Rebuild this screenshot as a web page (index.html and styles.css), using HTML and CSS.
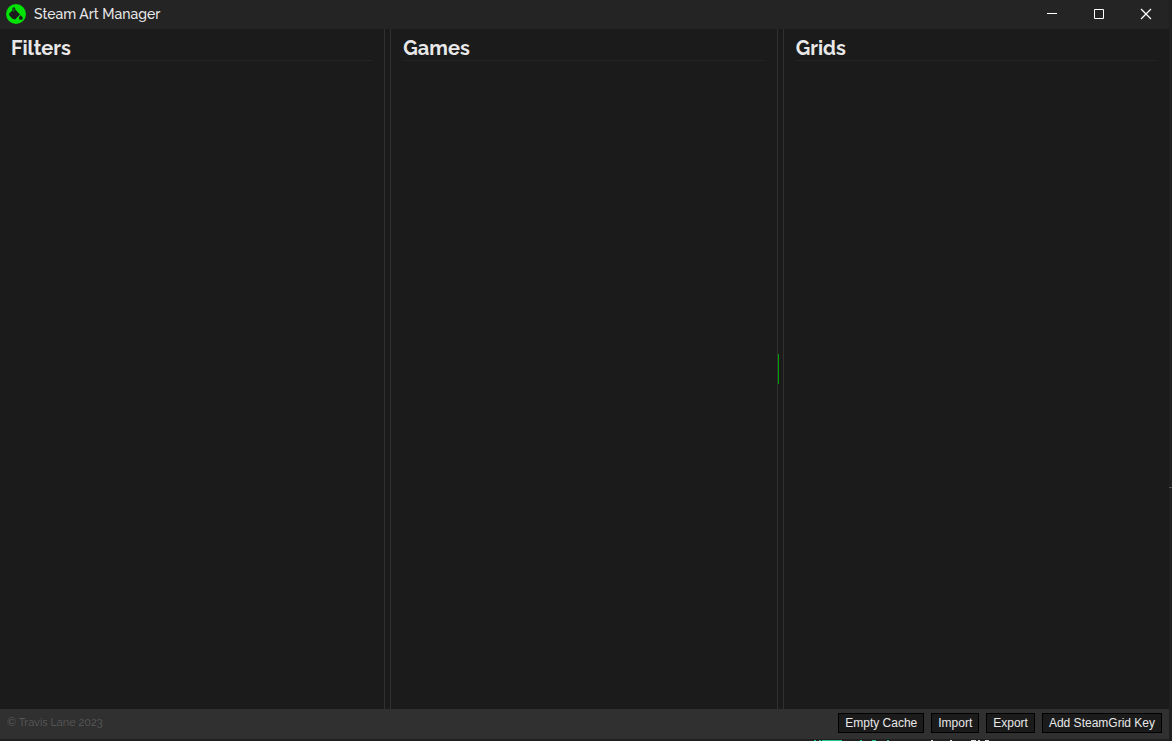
FILE: index.html
```html
<!DOCTYPE html>
<html lang="en">
<head>
<meta charset="utf-8">
<title>Steam Art Manager</title>
<link rel="stylesheet" href="styles.css">
</head>
<body>
<div class="app">
  <header class="titlebar">
    <svg class="logo" viewBox="0 0 20 20" aria-hidden="true">
      <circle cx="10" cy="10" r="10" fill="#00e304"/>
      <path d="M6.4 4.2Q7.8 2.2 9.2 4.2V5.4L14 10.4L9.2 15.4L6.5 14.8L3.2 11.2V9.4L6.4 6.6Z" fill="#1b1b1b"/>
      <path d="M7.8 4.4V8" stroke="#08880a" stroke-width="1"/>
      <path d="M14.7 11L16.6 13.4A1.9 1.9 0 1 1 12.9 13.7Z" fill="#1b1b1b"/>
    </svg>
    <span class="app-name">Steam Art Manager</span>
    <div class="window-controls">
      <button class="window-button" type="button" aria-label="Minimize"><svg viewBox="0 0 12 12"><path d="M1 5.5H11"/></svg></button>
      <button class="window-button" type="button" aria-label="Maximize"><svg viewBox="0 0 12 12"><path d="M1.5 1.5H10.5V10.5H1.5Z"/></svg></button>
      <button class="window-button" type="button" aria-label="Close"><svg viewBox="0 0 12 12"><path class="cross" d="M1 1L11 11M11 1L1 11"/></svg></button>
    </div>
  </header>
  <main class="panels">
    <section class="panel"><h2 class="panel-title">Filters</h2></section>
    <div class="splitter"></div>
    <section class="panel"><h2 class="panel-title">Games</h2></section>
    <div class="splitter"><span class="grip"></span></div>
    <section class="panel"><h2 class="panel-title">Grids</h2></section>
  </main>
  <footer class="footer">
    <span class="copyright">© Travis Lane 2023</span>
    <div class="actions">
      <button class="action" type="button">Empty Cache</button>
      <button class="action" type="button">Import</button>
      <button class="action" type="button">Export</button>
      <button class="action" type="button">Add SteamGrid Key</button>
    </div>
  </footer>
</div>
<svg class="backdrop-text" viewBox="0 0 180 1" aria-hidden="true">
  <path d="M4 .5h2M9 .5h2M12 .5h20M50 .5h2M62 .5h4M77 .5h2" stroke="#23c98b"/>
  <path d="M121 .5h2M140 .5h2M161 .5h5M168 .5h2M175 .5h4" stroke="#ddd"/>
</svg>
<span class="backdrop-mark"></span>
</body>
</html>
```
FILE: styles.css
```css
* { box-sizing: border-box; }
body {
  margin: 0;
  height: 100vh;
  padding: 0 3px 2px 0;
  background: #202020;
  color: #e8e8e8;
  font-family: Raleway, Lato, sans-serif;
  overflow: hidden;
}
.app { display: flex; flex-direction: column; height: 100%; background: #1b1b1b; }
.titlebar { display: flex; align-items: center; height: 29px; padding: 0 0 1px 6px; background: #242424; }
.logo { width: 20px; height: 20px; margin-right: 8px; }
.app-name { font-size: 14px; line-height: 20px; font-weight: 500; }
.window-controls { display: flex; margin-left: auto; }
.window-button { display: grid; place-items: center; width: 47px; height: 28px; padding: 0; border: 0; background: none; }
.window-button svg { width: 12px; height: 12px; fill: none; stroke: #fff; stroke-width: 1; }
.window-button .cross { stroke-width: 1.3; }
.panels { display: flex; flex: 1; min-height: 0; }
.panel { flex: 1; padding: 7px 12px 0; }
.panel:first-child { padding-left: 11px; }
.panel-title { margin: 0; border-bottom: 1px solid #252525; font-size: 20px; line-height: 24px; font-weight: 700; }
.splitter { position: relative; width: 7px; border: solid #303030; border-width: 0 1px; }
.grip { position: absolute; left: 0; top: 325px; width: 1px; height: 30px; background: #00a000; }
.footer { display: flex; align-items: center; justify-content: space-between; height: 30px; padding: 0 7px 2px; background: #303030; }
.copyright { color: #5c5c5c; font-size: 11px; line-height: 14px; }
.actions { display: flex; gap: 7px; }
.action { height: 20px; padding: 0 6px; border: 1px solid #000; background: #1b1b1b; color: #e8e8e8; font: 12px/18px "Liberation Sans", Arial, sans-serif; }
.backdrop-text { position: absolute; right: 182px; bottom: 0; width: 180px; height: 1px; }
.backdrop-mark { position: absolute; right: 0; top: 487px; width: 3px; height: 1px; background: #555; }
```
